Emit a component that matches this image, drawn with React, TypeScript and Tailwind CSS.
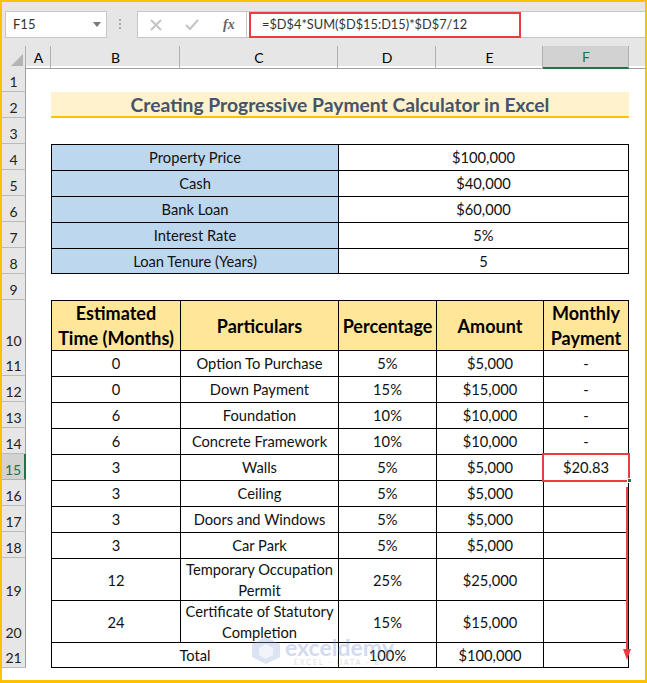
import type {ReactNode} from "react"

const font = "font-['Lato','Liberation_Sans',sans-serif]"
const gridCols = "grid grid-cols-[24px_25px_129px_158px_98px_107px_86px_1fr]"

const ColHead = ({label, active}: {label: string; active?: boolean}) => (
    <div
        className={
            active
                ? "flex items-center justify-center pl-[1px] bg-[#d2d2d2] border-b-2 border-b-[#217346] border-r border-r-[#b0b0b0] text-[#217346] text-[14px]"
                : "flex items-center justify-center pl-[1px] border-r border-r-[#b0b0b0] border-b border-b-[#a0a0a0] text-[14px] text-black"
        }
    >
        {label}
    </div>
)

interface RowProps {
    num: number
    height: string
    active?: boolean
    children?: ReactNode
}

// one sheet row: the number on the left, then cells from column A on
const Row = ({num, height, active, children}: RowProps) => (
    <div className={`${gridCols} ${height}`}>
        <div
            className={
                active
                    ? "flex items-end justify-center bg-[#d2d2d2] border-r-2 border-r-[#217346] border-b border-b-[#b0b0b0] text-[14px] leading-[18px] text-[#217346]"
                    : "flex items-end justify-center bg-[#e6e6e6] border-r border-r-[#a0a0a0] border-b border-b-[#bbbbbb] text-[14px] leading-[18px] text-[#222]"
            }
        >
            {num}
        </div>
        <div />
        {children}
    </div>
)

const Cell = ({children, span, last, bottom, fill, bold}: {
    children?: ReactNode
    span?: string
    last?: boolean
    bottom?: boolean
    fill?: string
    bold?: boolean
}) => (
    <div
        className={[
            "flex items-center justify-center text-center border-l border-t border-black",
            span ?? "",
            last ? "border-r" : "",
            bottom ? "border-b" : "",
            fill ?? "",
            bold ? "font-bold text-[18px] leading-[25px] text-black" : "text-[14.7px] leading-[21px] text-[#111]",
        ].join(" ")}
    >
        {children}
    </div>
)

const summary = [
    {num: 4, label: "Property Price", value: "$100,000"},
    {num: 5, label: "Cash", value: "$40,000"},
    {num: 6, label: "Bank Loan", value: "$60,000"},
    {num: 7, label: "Interest Rate", value: "5%"},
    {num: 8, label: "Loan Tenure (Years)", value: "5"},
]

const payments = [
    {num: 11, time: "0", name: "Option To Purchase", pct: "5%", amount: "$5,000", monthly: "-", h: "h-[26px]"},
    {num: 12, time: "0", name: "Down Payment", pct: "15%", amount: "$15,000", monthly: "-", h: "h-[26px]"},
    {num: 13, time: "6", name: "Foundation", pct: "10%", amount: "$10,000", monthly: "-", h: "h-[26px]"},
    {num: 14, time: "6", name: "Concrete Framework", pct: "10%", amount: "$10,000", monthly: "-", h: "h-[26px]"},
    {num: 15, time: "3", name: "Walls", pct: "5%", amount: "$5,000", monthly: "$20.83", h: "h-[26px]"},
    {num: 16, time: "3", name: "Ceiling", pct: "5%", amount: "$5,000", monthly: "", h: "h-[26px]"},
    {num: 17, time: "3", name: "Doors and Windows", pct: "5%", amount: "$5,000", monthly: "", h: "h-[26px]"},
    {num: 18, time: "3", name: "Car Park", pct: "5%", amount: "$5,000", monthly: "", h: "h-[26px]"},
    {num: 19, time: "12", name: "Temporary Occupation Permit", pct: "25%", amount: "$25,000", monthly: "", h: "h-[42px]"},
    {num: 20, time: "24", name: "Certificate of Statutory Completion", pct: "15%", amount: "$15,000", monthly: "", h: "h-[42px]"},
]

const Watermark = () => (
    <div className="absolute left-[252px] top-[637px] flex items-start gap-[5px] opacity-30">
        <svg width="28" height="27" viewBox="0 0 28 27">
            <path d="M14 0 L28 7 L28 20 L14 27 L0 20 L0 7 Z" fill="#8ea4d8" />
            <path d="M14 7 L21 11 L21 18 L14 22 L7 18 L7 11 Z" fill="#d5dcf0" />
        </svg>
        <div className="flex flex-col items-center">
            <span className="text-[23px] leading-[21px] font-bold text-[#6d8ad0]">exceldemy</span>
            <span className="text-[7px] leading-[8px] tracking-[2px] text-[#888]">EXCEL - DATA - BI</span>
        </div>
    </div>
)

export default function App() {
    return (
        <div className={`relative w-[647px] h-[683px] overflow-hidden bg-white ${font}`}>
            <div className="h-full border-[2px] border-b-[3px] border-[#ffc000]">
                {/* formula bar */}
                <div className="flex items-start h-[44px] bg-[#e6e6e6] pt-[9px]">
                    <div className="flex items-center justify-between ml-[3px] w-[102px] h-[27px] bg-white border border-[#c6c6c6] pl-[7px] pr-[5px] text-[13px] text-[#333]">
                        F15
                        <span className="w-0 h-0 border-x-[4px] border-x-transparent border-t-[5px] border-t-[#777]" />
                    </div>
                    <div className="flex flex-col gap-[2px] mt-[8px] ml-[12px]">
                        <span className="w-[2px] h-[2px] bg-[#aaa]" />
                        <span className="w-[2px] h-[2px] bg-[#aaa]" />
                        <span className="w-[2px] h-[2px] bg-[#aaa]" />
                    </div>
                    <div className="flex items-center ml-[16px] w-[110px] h-[27px] bg-white border border-[#c6c6c6]">
                        <svg className="ml-[12px]" width="12" height="12" viewBox="0 0 12 12">
                            <path d="M1 1 L11 11 M11 1 L1 11" stroke="#c4c4c4" strokeWidth="2" />
                        </svg>
                        <svg className="ml-[23px]" width="14" height="12" viewBox="0 0 14 12">
                            <path d="M1 6 L5 10 L13 1" stroke="#c4c4c4" strokeWidth="2" fill="none" />
                        </svg>
                        <span className="ml-[24px] font-['Liberation_Serif',serif] italic font-bold text-[14px] text-[#666]">
                            fx
                        </span>
                    </div>
                    <div className="flex-1 h-[27px] bg-white border-y border-[#c6c6c6] text-[12.8px] leading-[25px] text-[#333] pl-[15px]">
                        =$D$4*SUM($D$15:D15)*$D$7/12
                    </div>
                </div>
                {/* column letters */}
                <div className={`${gridCols} h-[20px] bg-[#e6e6e6]`}>
                    <div className="flex items-end justify-end border-r border-r-[#b0b0b0] border-b border-b-[#a0a0a0] pr-[2px] pb-[2px]">
                        <span className="w-0 h-0 border-l-[12px] border-l-transparent border-b-[12px] border-b-[#b4b4b4]" />
                    </div>
                    <ColHead label="A" />
                    <ColHead label="B" />
                    <ColHead label="C" />
                    <ColHead label="D" />
                    <ColHead label="E" />
                    <ColHead label="F" active />
                    <div className="border-b border-b-[#a0a0a0]" />
                </div>

                <Row num={1} height="h-[26px]" />
                <Row num={2} height="h-[26px]">
                    <div className="col-span-5 flex items-center justify-center pt-[1px] bg-[#fff2cc] border-b-[2px] border-b-[#ffc000] text-[19.3px] leading-[23px] font-bold text-[#44546a]">
                        Creating Progressive Payment Calculator in Excel
                    </div>
                </Row>
                <Row num={3} height="h-[26px]" />

                {summary.map((s, i) => (
                    <Row key={s.num} num={s.num} height="h-[26px]">
                        <Cell span="col-span-2" fill="bg-[#bdd7ee]" bottom={i === summary.length - 1}>{s.label}</Cell>
                        <Cell span="col-span-3" last bottom={i === summary.length - 1}>{s.value}</Cell>
                    </Row>
                ))}

                <Row num={9} height="h-[26px]" />
                <Row num={10} height="h-[50px]">
                    <Cell bold fill="bg-[#ffe699]">Estimated<br />Time (Months)</Cell>
                    <Cell bold fill="bg-[#ffe699]">Particulars</Cell>
                    <Cell bold fill="bg-[#ffe699]">Percentage</Cell>
                    <Cell bold fill="bg-[#ffe699]">Amount</Cell>
                    <Cell bold last fill="bg-[#ffe699]">Monthly<br />Payment</Cell>
                </Row>

                {payments.map(p => (
                    <Row key={p.num} num={p.num} height={p.h} active={p.num === 15}>
                        <Cell>{p.time}</Cell>
                        <Cell>{p.name}</Cell>
                        <Cell>{p.pct}</Cell>
                        <Cell>{p.amount}</Cell>
                        <Cell last>{p.monthly}</Cell>
                    </Row>
                ))}

                <Row num={21} height="h-[26px]">
                    <Cell span="col-span-2" bottom>Total</Cell>
                    <Cell bottom>100%</Cell>
                    <Cell bottom>$100,000</Cell>
                    <Cell last bottom />
                </Row>
            </div>

            {/* annotations over the sheet */}
            <div className="absolute left-[249px] top-[12px] w-[272px] h-[26px] border-[2px] border-[#ee3b42]" />
            <div className="absolute left-[542px] top-[453px] w-[88px] h-[29px] border-[2px] border-[#ee3b42]" />
            <div className="absolute left-[627px] top-[478px] w-[5px] h-[5px] bg-[#217346] border border-white" />
            <svg className="absolute left-[621px] top-[487px]" width="12" height="175" viewBox="0 0 12 175">
                <path d="M6 0 V164" stroke="#e8434a" strokeWidth="2" />
                <path d="M2 162 H10 L6 173 Z" fill="#ee3b42" />
            </svg>
            <Watermark />
        </div>
    )
}
